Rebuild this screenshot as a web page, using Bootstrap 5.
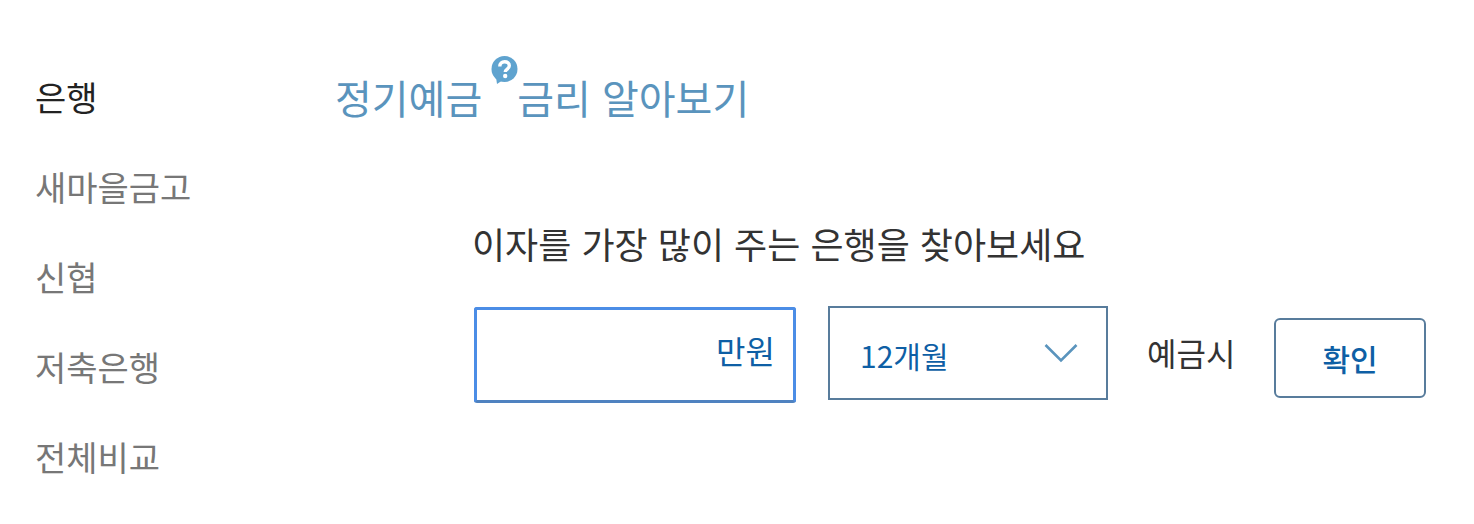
<!DOCTYPE html>
<html lang="ko">
<head>
<meta charset="utf-8">
<title>정기예금 금리 알아보기</title>
<link href="https://cdn.jsdelivr.net/npm/bootstrap@5.3.0/dist/css/bootstrap.min.css" rel="stylesheet">
<style>
html,body{height:524px;overflow:hidden;background:#fff}
body{font-family:"Noto Sans CJK KR","Noto Sans",sans-serif;color:#333}
.shell{height:524px;padding:52px 48px 0 35px}
.side-col{width:300px;flex:none}
.side-item{display:block;height:90px;line-height:90px;font-size:34px;color:#777;text-decoration:none;white-space:nowrap}
.side-item.on{color:#222}
.head-line{height:90px;line-height:90px;font-size:40px;color:#5a94bd;white-space:nowrap;margin:0;font-weight:400}
.help-ico{display:inline-block;width:27px;height:28px;margin:0 -1px 0 9px;vertical-align:30px}
.form-area{padding:76px 0 0 137px}
.lead-line{font-size:36px;line-height:50px;color:#333;margin:0 0 39px;white-space:nowrap}
.field-row{padding-left:2px}
.amount-box{width:322px;height:96px;border:3px solid #4b8de6;border-bottom-color:#4f82c0;border-radius:3px;font-size:32px;color:#0e5fa5;padding:0 18px 10px 0;flex:none}
.term-box{width:280px;height:94px;border:2px solid #587c9c;padding:0 28px 0 30px;margin:-4px 39px 0 32px;font-size:30px;color:#0e5fa5;flex:none}
.term-text{padding-top:4px}
.suffix{font-size:32px;color:#333;white-space:nowrap;padding-bottom:6px}
.ok-btn{width:152px;height:80px;border:2px solid #587c9c;border-radius:6px;background:#fff;color:#0e5fa5;font-size:30px;font-weight:500;padding:0;margin-top:6px}
</style>
</head>
<body>
<div class="shell d-flex">
  <nav class="side-col">
    <a class="side-item on" href="#">은행</a>
    <a class="side-item" href="#">새마을금고</a>
    <a class="side-item" href="#">신협</a>
    <a class="side-item" href="#">저축은행</a>
    <a class="side-item" href="#">전체비교</a>
  </nav>
  <main class="flex-grow-1">
    <h1 class="head-line">정기예금<svg class="help-ico" viewBox="0 0 27 28"><circle cx="13.5" cy="13" r="13" fill="#5fa3cf"/><path d="M5 21l1 7 6-4z" fill="#5fa3cf"/><path d="M8.8 10.4c0-2.8 2-4.6 4.8-4.6s4.7 1.6 4.7 3.9c0 3.4-4 3.2-4 6.2" fill="none" stroke="#fff" stroke-width="3.4"/><circle cx="14.2" cy="20" r="2.2" fill="#fff"/></svg>금리 알아보기</h1>
    <div class="form-area">
      <p class="lead-line">이자를 가장 많이 주는 은행을 찾아보세요</p>
      <div class="field-row d-flex align-items-center">
        <div class="amount-box d-flex align-items-center justify-content-end">만원</div>
        <div class="term-box d-flex align-items-center justify-content-between">
          <span class="term-text">12개월</span>
          <svg width="34" height="20" viewBox="0 0 34 20"><path d="M1.5 2l15.5 15.5L32.5 2" fill="none" stroke="#5a94bd" stroke-width="2.6"/></svg>
        </div>
        <span class="suffix">예금시</span>
        <button class="ok-btn btn ms-auto" type="button">확인</button>
      </div>
    </div>
  </main>
</div>
<script src="https://cdn.jsdelivr.net/npm/bootstrap@5.3.0/dist/js/bootstrap.bundle.min.js"></script>
</body>
</html>
